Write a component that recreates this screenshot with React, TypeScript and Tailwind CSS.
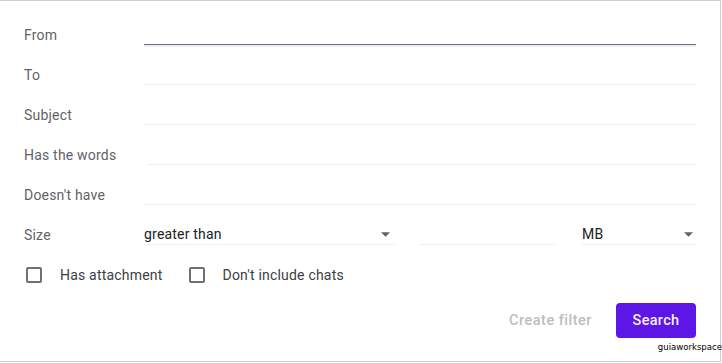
import React from "react";

function Arrow() {
  return (
    <svg width="9" height="5" viewBox="0 0 10 5" className="shrink-0">
      <path d="M0 0 L10 0 L5 5 Z" fill="#5f6368" />
    </svg>
  );
}

function Row({ label, children }: { label: string; children: React.ReactNode }) {
  return (
    <div className="flex h-10 items-center">
      <div className="w-[120px] shrink-0 text-[14px] tracking-[0.2px] text-[#5f6368]">{label}</div>
      <div className="flex flex-1 items-center">{children}</div>
    </div>
  );
}

function Line({ dark = false, offset = false }: { dark?: boolean; offset?: boolean }) {
  return (
    <div
      className={
        dark
          ? "h-[19px] flex-1 border-b border-[#6a6978] shadow-[0_2px_0_#f1effc]"
          : offset
          ? "ml-1 h-[19px] flex-1 border-b border-[#eeeeee]"
          : "h-[19px] flex-1 border-b border-[#eeeeee]"
      }
    />
  );
}

function Check({ label }: { label: string }) {
  return (
    <div className="flex items-center">
      <div className="h-4 w-4 rounded-[2px] border-2 border-[#707070]" />
      <span className="ml-[18px] text-[14px] tracking-[0.2px] text-[#3c4043]">{label}</span>
    </div>
  );
}

export default function App() {
  return (
    <div className="relative h-[363px] w-[722px] bg-white" style={{ fontFamily: "Roboto, 'Liberation Sans', sans-serif" }}>
      <div className="flex h-[362px] w-[721px] flex-col border-r border-t border-b border-[#cfcfcf] pl-6 pr-[24px] pt-[14px]">
        <Row label="From">
          <Line dark />
        </Row>
        <Row label="To">
          <Line />
        </Row>
        <Row label="Subject">
          <Line />
        </Row>
        <Row label="Has the words">
          <Line offset />
        </Row>
        <Row label="Doesn't have">
          <Line />
        </Row>
        <Row label="Size">
          <div className="flex h-[19px] w-[251px] items-center justify-between border-b border-[#eeeeee] pr-[5px]">
            <span className="text-[14px] tracking-[0.2px] text-[#202124]">greater than</span>
            <Arrow />
          </div>
          <div className="ml-[25px] h-[19px] w-[135px] border-b border-[#eeeeee]" />
          <div className="ml-[27px] flex h-[19px] flex-1 items-center justify-between border-b border-[#eeeeee] pr-[3px]">
            <span className="text-[14px] tracking-[0.2px] text-[#202124]">MB</span>
            <Arrow />
          </div>
        </Row>
        <div className="flex h-10 items-center pl-[2px]">
          <Check label="Has attachment" />
          <div className="ml-[26px]">
            <Check label="Don't include chats" />
          </div>
        </div>
        <div className="mt-[8px] flex items-center justify-end">
          <span className="text-[14.5px] font-medium tracking-[0.5px] text-[#bdbdbd]">Create filter</span>
          <button className="ml-6 h-[35px] w-[80px] rounded-[4px] bg-[#5d16e6] text-[14.5px] font-medium tracking-[0.3px] text-[#f4efff]">
            Search
          </button>
        </div>
      </div>
      <div className="absolute right-0 top-[340px] text-[9.5px] text-black" style={{ fontFamily: "'DejaVu Sans Condensed', 'Liberation Sans', sans-serif" }}>guiaworkspace</div>
    </div>
  );
}
